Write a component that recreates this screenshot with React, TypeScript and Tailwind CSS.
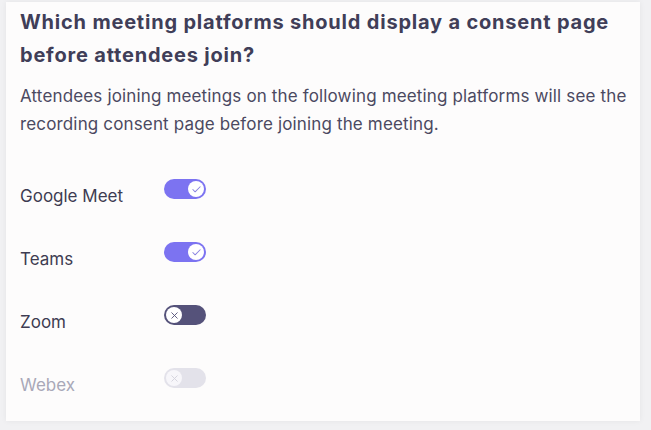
import { Check, X } from 'lucide-react';

type Platform = { name: string; state: 'on' | 'off' | 'disabled' };

const platforms: Platform[] = [
  { name: 'Google Meet', state: 'on' },
  { name: 'Teams', state: 'on' },
  { name: 'Zoom', state: 'off' },
  { name: 'Webex', state: 'disabled' },
];

function Toggle({ state }: { state: Platform['state'] }) {
  if (state === 'on') {
    return (
      <div className="flex h-[20px] w-[42px] items-center justify-end rounded-full bg-[#7c73f1] px-[2px]">
        <span className="flex h-[16px] w-[16px] items-center justify-center rounded-full bg-white">
          <Check size={11} strokeWidth={2.2} className="text-[#8a83e0]" />
        </span>
      </div>
    );
  }
  const dark = state === 'off';
  return (
    <div className={`flex h-[20px] w-[42px] items-center rounded-full px-[2px] ${dark ? 'bg-[#55527a]' : 'bg-[#e3e2ea]'}`}>
      <span className={`flex h-[16px] w-[16px] items-center justify-center rounded-full ${dark ? 'bg-white' : 'bg-[#f7f6fa]'}`}>
        <X size={11} strokeWidth={2} className={dark ? 'text-[#55527a]' : 'text-[#d3d2dc]'} />
      </span>
    </div>
  );
}

export default function App() {
  return (
    <div className="h-[430px] w-[651px] bg-[#f1f1f3] pl-[6px] pr-[11px] pt-[2px] pb-[9px] font-['Inter',sans-serif]">
      <div className="h-full bg-[#fdfcfc] pl-[14px] pr-[6px] pt-[4px] shadow-[0_0_6px_rgba(0,0,0,0.06)]">
        <h2 className="pr-[12px] text-[20px] font-bold leading-[33px] tracking-[0.8px] text-[#403e58]">
          Which meeting platforms should display a consent page before attendees join?
        </h2>
        <p className="mt-[10px] text-[17px] leading-[28px] tracking-[0.15px] text-[#4b4961]">
          Attendees joining meetings on the following meeting platforms will see the recording consent page before joining the meeting.
        </p>
        <div className="mt-[41px] flex flex-col gap-[43px]">
          {platforms.map(p => (
            <div key={p.name} className="flex h-[20px] items-center">
              <span className={`w-[144px] pt-[15px] text-[17px] ${p.state === 'disabled' ? 'text-[#a9a8b8]' : 'text-[#3e3c52]'}`}>
                {p.name}
              </span>
              <Toggle state={p.state} />
            </div>
          ))}
        </div>
      </div>
    </div>
  );
}
